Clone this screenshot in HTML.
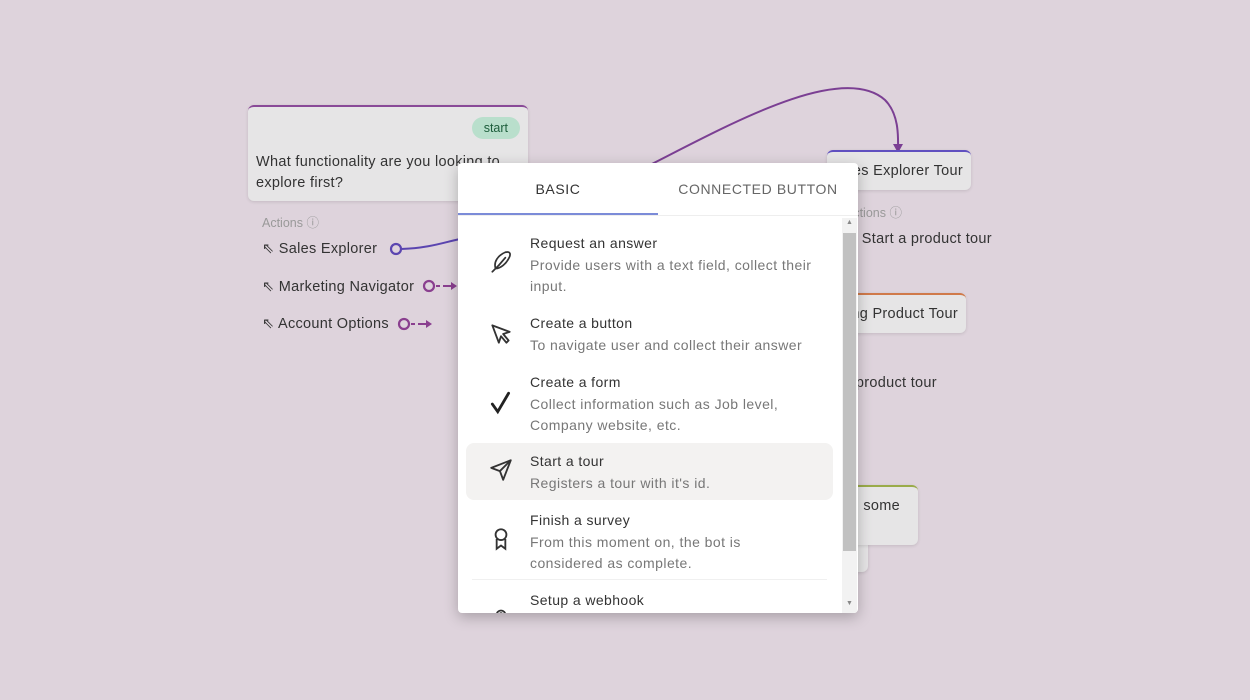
<!DOCTYPE html>
<html><head><style>
body{margin:0;width:1250px;height:700px;background:#ded3dc;font-family:"Liberation Sans",sans-serif;position:relative;overflow:hidden;color:#333}
.abs{position:absolute}
.node{position:absolute;background:#e6e5e6;border-radius:6px;box-shadow:0 1px 3px rgba(0,0,0,.12)}
.t{font-size:14.5px;color:#333;letter-spacing:.3px}
.item{position:absolute;left:8px;width:367px;border-radius:8px}
.item .h{position:absolute;left:64px;top:0;font-size:14px;color:#333;letter-spacing:.4px}
.item .d{position:absolute;left:64px;top:20px;font-size:14px;color:#777;line-height:20.5px;width:290px;letter-spacing:.45px}
.item svg{position:absolute;left:22px}
</style></head><body>
<svg class="abs" style="left:0;top:0" width="1250" height="700">
<path d="M640 170 C720 130 840 60 885 100 C900 115 898 140 898 150" fill="none" stroke="#7b3f93" stroke-width="2"/>
<path d="M893 144 L898 153 L903 144Z" fill="#7b3f93"/>
<path d="M401 249 C430 248 445 242 460 239" fill="none" stroke="#5b45b0" stroke-width="2"/>
<circle cx="396" cy="249" r="5" fill="none" stroke="#5b45b0" stroke-width="2.2"/>
<circle cx="429" cy="286" r="5" fill="none" stroke="#8a3f8f" stroke-width="2.2"/>
<path d="M436 286h4M443 286h8" stroke="#8a3f8f" stroke-width="2"/><path d="M451 282l6 4-6 4z" fill="#8a3f8f"/>
<circle cx="404" cy="324" r="5" fill="none" stroke="#8a3f8f" stroke-width="2.2"/>
<path d="M411 324h4M418 324h8" stroke="#8a3f8f" stroke-width="2"/><path d="M426 320l6 4-6 4z" fill="#8a3f8f"/>
</svg>
<div class="node" style="left:248px;top:105px;width:280px;height:94px;border-top:2px solid #8a4a98">
<div class="abs" style="right:8px;top:10px;background:#b9dfcc;color:#1d5e3c;border-radius:12px;padding:4px 12px;font-size:12.5px">start</div>
<div class="abs t" style="left:8px;top:45px;line-height:21px;width:265px">What functionality are you looking to explore first?</div>
</div>
<div class="abs" style="left:262px;top:212px;font-size:12.5px;color:#999">Actions ⓘ</div>
<div class="abs t" style="left:262px;top:241px">⇖ Sales Explorer</div>
<div class="abs t" style="left:262px;top:279px">⇖ Marketing Navigator</div>
<div class="abs t" style="left:262px;top:316px">⇖ Account Options</div>

<div class="node" style="left:827px;top:150px;width:144px;height:38px;border-top:2px solid #6050c0"><div class="abs t" style="right:8px;top:11px">Sales Explorer Tour</div></div>
<div class="abs" style="left:845px;top:202px;font-size:12.5px;color:#999">Actions ⓘ</div>
<div class="abs t" style="left:845px;top:231px">⇖ Start a product tour</div>
<div class="node" style="left:800px;top:293px;width:166px;height:38px;border-top:2px solid #d07a4a"><div class="abs t" style="right:8px;top:11px">Marketing Product Tour</div></div>
<div class="abs" style="left:845px;top:345px;font-size:12.5px;color:#999">ⓘ</div>
<div class="abs t" style="left:790px;top:375px">⇖ Start a product tour</div>
<div class="node" style="left:780px;top:520px;width:88px;height:52px"></div>
<div class="node" style="left:780px;top:485px;width:138px;height:58px;border-top:2px solid #9aab4a"><div class="abs t" style="right:18px;top:11px">add some</div></div>

<div class="abs" style="left:458px;top:163px;width:400px;height:450px;background:#fff;border-radius:4px;box-shadow:0 4px 14px rgba(0,0,0,.25);overflow:hidden">
<div class="abs" style="left:0;top:0;width:400px;height:52px;border-bottom:1px solid #eee"></div>
<div class="abs" style="left:0;top:18px;width:200px;text-align:center;font-size:14px;letter-spacing:.6px;color:#333">BASIC</div>
<div class="abs" style="left:200px;top:18px;width:200px;text-align:center;font-size:14px;letter-spacing:.6px;color:#666">CONNECTED BUTTON</div>
<div class="abs" style="left:0;top:50px;width:200px;height:2px;background:#7b8bd8"></div>
<div class="abs" style="left:384px;top:55px;width:15px;height:395px;background:#f2f2f2"></div>
<div class="abs" style="left:385px;top:70px;width:13px;height:318px;background:#c1c1c1"></div>
<div class="abs" style="left:388px;top:56px;font-size:7px;color:#888">▲</div>
<div class="abs" style="left:388px;top:437px;font-size:7px;color:#888">▼</div>

<div class="item" style="top:72px;height:70px"><svg style="top:14px" width="26" height="26" viewBox="0 0 24 24" fill="none" stroke="#333" stroke-width="1.6" stroke-linecap="round"><path d="M4 21L10 15M7 18C5 12 9 6 16 3c4-1 5 1 4 4-3 7-9 11-13 11zM10 15l6-7"/></svg><div class="h">Request an answer</div><div class="d">Provide users with a text field, collect their input.</div></div>
<div class="item" style="top:152px;height:50px"><svg style="top:6px" width="26" height="26" viewBox="0 0 24 24" fill="none" stroke="#333" stroke-width="1.7" stroke-linejoin="round"><path d="M4 4l16 6-6 2 5 6-2 2-5-6-2 6z"/></svg><div class="h">Create a button</div><div class="d">To navigate user and collect their answer</div></div>
<div class="item" style="top:211px;height:70px"><svg style="top:16px" width="26" height="26" viewBox="0 0 24 24" fill="none" stroke="#222" stroke-width="2.6" stroke-linecap="round"><path d="M4 13l5 7L19 3"/></svg><div class="h">Create a form</div><div class="d" style="width:260px">Collect information such as Job level, Company website, etc.</div></div>
<div class="item" style="top:280px;height:57px;background:#f3f2f1"><svg style="top:14px" width="26" height="26" viewBox="0 0 24 24" fill="none" stroke="#333" stroke-width="1.7" stroke-linejoin="round"><path d="M21 3L3 10l8 3 3 8z"/><path d="M11 13l10-10"/></svg><div class="h" style="top:10px">Start a tour</div><div class="d" style="top:30px">Registers a tour with it's id.</div></div>
<div class="item" style="top:349px;height:70px"><svg style="top:14px" width="26" height="26" viewBox="0 0 24 24" fill="none" stroke="#333" stroke-width="1.7"><circle cx="12" cy="8" r="5"/><path d="M8 12v9l4-3 4 3v-9"/></svg><div class="h">Finish a survey</div><div class="d" style="width:245px">From this moment on, the bot is considered as complete.</div></div>
<div class="abs" style="left:14px;top:416px;width:355px;height:1px;background:#f0f0f0"></div>
<div class="item" style="top:429px;height:30px"><svg style="top:12px" width="26" height="26" viewBox="0 0 24 24" fill="none" stroke="#333" stroke-width="1.7"><circle cx="12" cy="10" r="4"/><circle cx="12" cy="10" r="1.5"/></svg><div class="h">Setup a webhook</div></div>
</div>
</body></html>
